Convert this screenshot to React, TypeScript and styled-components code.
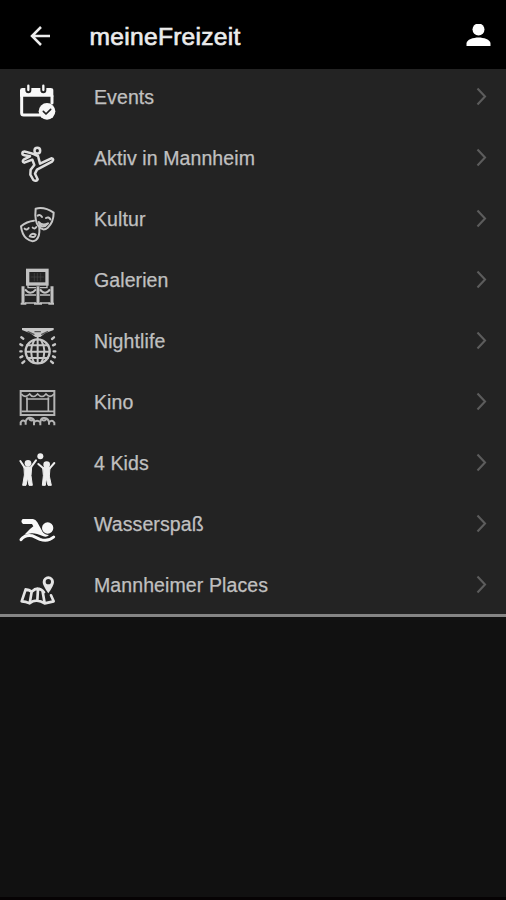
import React from "react";
import styled, { createGlobalStyle } from "styled-components";

const GlobalStyle = createGlobalStyle`
  * { box-sizing: border-box; }
  body { margin: 0; background: #111; }
`;

const Screen = styled.div`
  width: 100%;
  height: 900px;
  display: flex;
  flex-direction: column;
  overflow: hidden;
  background: #111;
  border-bottom: 3px solid #060304;
  font-family: "Liberation Sans", Arial, sans-serif;
`;

const Header = styled.header`
  flex: none;
  height: 69px;
  display: flex;
  align-items: center;
  padding: 4px 15px 0 28px;
  background: #000;
  color: #ececec;
`;

const Title = styled.h1`
  flex: 1;
  margin: 0 0 0 37.6px;
  font-size: 24.6px;
  line-height: 30px;
  font-weight: 400;
  letter-spacing: 0.26px;
  -webkit-text-stroke: 0.65px currentColor;
`;

const HeaderIcon = styled.svg<{ $size: number }>`
  flex: none;
  display: block;
  width: ${(p) => p.$size}px;
  height: ${(p) => p.$size}px;
`;

const List = styled.ul`
  flex: none;
  height: 548px;
  margin: 0;
  padding: 0;
  list-style: none;
  overflow: hidden;
  background: #232323;
  border-bottom: 3px solid #858585;
`;

const Row = styled.li`
  height: 61px;
  display: flex;
  align-items: flex-start;
  padding: 0 16px 0 10px;
`;

const RowIcon = styled.svg<{ $top: number; $tone: string }>`
  flex: none;
  display: block;
  width: 60px;
  height: 60px;
  margin-top: ${(p) => p.$top}px;
  color: ${(p) => p.$tone};
  fill: none;
  stroke: currentColor;
  stroke-width: 9;
  stroke-linecap: round;
  stroke-linejoin: round;
  overflow: visible;
`;

const Label = styled.span`
  flex: 1;
  margin-left: 24px;
  padding-top: 16px;
  color: #c0c0c0;
  font-size: 19.5px;
  line-height: 25px;
  letter-spacing: 0.1px;
  -webkit-text-stroke: 0.25px currentColor;
`;

const Chevron = styled.svg`
  flex: none;
  width: 16px;
  height: 20px;
  margin-top: 17px;
  fill: none;
  stroke: #5c5c5c;
  stroke-width: 2.1;
`;

type Item = { label: string; top: number; tone: string; art: React.ReactNode };

const items: Item[] = [
  {
    label: "Events",
    top: 6,
    tone: "#f8f8f8",
    art: (
      <>
        <path d="M35 63V114Q35 120 41 120H91M126 84V63" />
        <path d="M30 65V46Q30 39 37 39H46V45Q46 55 55 55T64 45V39H91V45Q91 55 100 55T109 45V39H122Q130 39 130 46V65Z" fill="currentColor" stroke="none" />
        <path d="M55 32V45M100 32V45" strokeWidth="7" />
        <circle cx="111" cy="109" r="25" fill="currentColor" stroke="none" />
        <path d="M100 109L108 117L122 103" stroke="#232323" strokeWidth="5" />
      </>
    ),
  },
  {
    label: "Aktiv in Mannheim",
    top: 6,
    tone: "#dedede",
    art: (
      <g strokeWidth="7.5">
        <circle cx="82" cy="44" r="8.5" />
        <path d="M71 54L46 47Q37 46 37 52Q37 57 43 58L60 61L41 71Q35 77 43 80L67 71L73 87L62 101L61 116L70 132Q79 138 83 130L75 113L81 101L126 77Q134 69 124 67L90 83L84 60Z" />
      </g>
    ),
  },
  {
    label: "Kultur",
    top: 5,
    tone: "#c7c7c7",
    art: (
      <g strokeWidth="6">
        <path d="M77 38Q103 31 131 50Q131 78 113 95Q99 107 86 91Q73 77 77 38Z" />
        <path d="M72 74Q50 76 33 91Q36 115 49 127Q66 141 78 132Q90 122 88 96" />
        <path d="M83 59Q90 54 96 63M108 66Q116 61 121 70M86 78Q97 91 114 82Q103 96 90 89Z" />
        <path d="M44 98Q51 104 56 96M68 95Q74 101 79 93M59 121Q65 109 77 116Q75 127 59 121Z" />
      </g>
    ),
  },
  {
    label: "Galerien",
    top: 7,
    tone: "#c1c1c1",
    art: (
      <g strokeWidth="5" strokeLinecap="butt" strokeLinejoin="miter">
        <rect x="53" y="34" width="58" height="41" strokeWidth="10" />
        <path d="M62 54H102M73 42V67M82 42V67M92 42V67" stroke="#474747" strokeWidth="2" />
        <path d="M39 82V134M84 82V134M126 82V134" strokeWidth="9" />
        <path d="M32 134H49M72 134H96M115 134H132M45 91Q61 111 78 91M90 91Q105 111 120 91" strokeWidth="6" />
        <path d="M45 108H78M90 108H120M45 132H78M90 132H120M54 78V86H78M111 78V86H90" strokeWidth="4" />
      </g>
    ),
  },
  {
    label: "Nightlife",
    top: 6,
    tone: "#c7c7c7",
    art: (
      <g>
        <path d="M36 27H131V33L105 43L91 54H76L61 43L36 33Z" fill="currentColor" stroke="none" />
        <path d="M54 38L72 46M113 38L95 46M75 38H91" stroke="#555" strokeWidth="4" />
        <path d="M83 48V61" strokeWidth="6" />
        <circle cx="83" cy="97" r="36" strokeWidth="7" />
        <path d="M51 79H115M48 98H118M52 117H114M83 62V132M73 63Q54 96 72 131M93 63Q113 96 94 131" strokeWidth="6" />
        <path d="M34 55L40 59M31 76L37 79M31 97H35M31 115L37 112M37 132L43 127M132 55L126 60M135 76L129 79M136 97H131M135 115L129 112M129 132L123 127" strokeWidth="7" />
      </g>
    ),
  },
  {
    label: "Kino",
    top: 5,
    tone: "#b4b4b4",
    art: (
      <g strokeWidth="6" strokeLinecap="butt" strokeLinejoin="miter">
        <path d="M32 36H133V108H32Z" />
        <path d="M34 45Q45 59 59 45Q69 60 83 45Q96 60 108 45Q120 59 132 45M51 55V97M115 55V97M34 97H132M48 60H118" strokeWidth="5" />
        <path d="M32 139V130Q39 120 47 129V137M47 128Q51 114 63 117Q75 120 72 130V139M72 130Q81 120 91 130V139M91 130Q92 115 104 117Q116 119 117 130V137M117 130Q127 120 133 131V139M57 120Q64 129 72 120M94 120Q101 129 109 120" />
      </g>
    ),
  },
  {
    label: "4 Kids",
    top: 6,
    tone: "#eeeeee",
    art: (
      <g>
        <circle cx="91" cy="46" r="9" fill="currentColor" stroke="none" />
        <circle cx="54" cy="67" r="10" fill="currentColor" stroke="none" />
        <circle cx="110" cy="71" r="10" fill="currentColor" stroke="none" />
        <path d="M31 60L44 80H62L78 58M85 69L100 82H119L133 66" strokeWidth="6" />
        <path d="M43 78H65L63 104L67 133H57L53 110L48 133H38L43 103ZM99 80H120L118 105L124 133H114L109 112L106 133H97L100 105Z" fill="currentColor" strokeWidth="3" />
      </g>
    ),
  },
  {
    label: "Wasserspaß",
    top: 5,
    tone: "#f8f8f8",
    art: (
      <>
        <circle cx="113" cy="81" r="17" fill="currentColor" stroke="none" />
        <path d="M38 54H69Q77 55 82 64L98 93Q105 102 117 102Q111 109 100 106Q77 96 65 97L43 101L60 84L70 76L66 69H39Q30 61 38 54Z" fill="currentColor" stroke="none" />
        <path d="M33 116Q44 100 66 104L90 115Q114 123 131 108" strokeWidth="9" />
      </>
    ),
  },
  {
    label: "Mannheimer Places",
    top: 6,
    tone: "#e5e5e5",
    art: (
      <g strokeWidth="8">
        <path d="M47 79L35 115Q47 115 59 121Q70 112 81 113Q93 114 104 121L131 115L123 97M47 79Q57 80 65 86Q76 76 84 77Q94 78 102 88M65 86L59 121M84 77L82 113M98 86L104 121" />
        <path d="M115 91Q98 67 98 57A17 17 0 0 1 132 57Q132 67 115 91Z" fill="currentColor" stroke="none" />
        <circle cx="115" cy="56" r="8" fill="#232323" stroke="none" />
      </g>
    ),
  },
];

export default function App() {
  return (
    <Screen>
      <GlobalStyle />
      <Header>
        <HeaderIcon $size={24} viewBox="0 0 24 24" fill="none" stroke="currentColor" strokeWidth="2.5">
          <path d="M22 11H4M13 2L4 11L13 20" />
        </HeaderIcon>
        <Title>meineFreizeit</Title>
        <HeaderIcon $size={26} viewBox="0 0 26 26" fill="#fff">
          <circle cx="13.5" cy="5.5" r="6" />
          <path d="M1.5 22V19.500C1.500 15.500 8.500 13.500 13.500 13.500S25.500 15.500 25.500 19.500V22Z" />
        </HeaderIcon>
      </Header>
      <List>
        {items.map((item) => (
          <Row key={item.label}>
            <RowIcon viewBox="0 0 180 180" $top={item.top} $tone={item.tone} aria-hidden="true">
              {item.art}
            </RowIcon>
            <Label>{item.label}</Label>
            <Chevron viewBox="0 0 16 20">
              <path d="M3.500 2.500L11 10.500L3.500 18.500" />
            </Chevron>
          </Row>
        ))}
      </List>
    </Screen>
  );
}
